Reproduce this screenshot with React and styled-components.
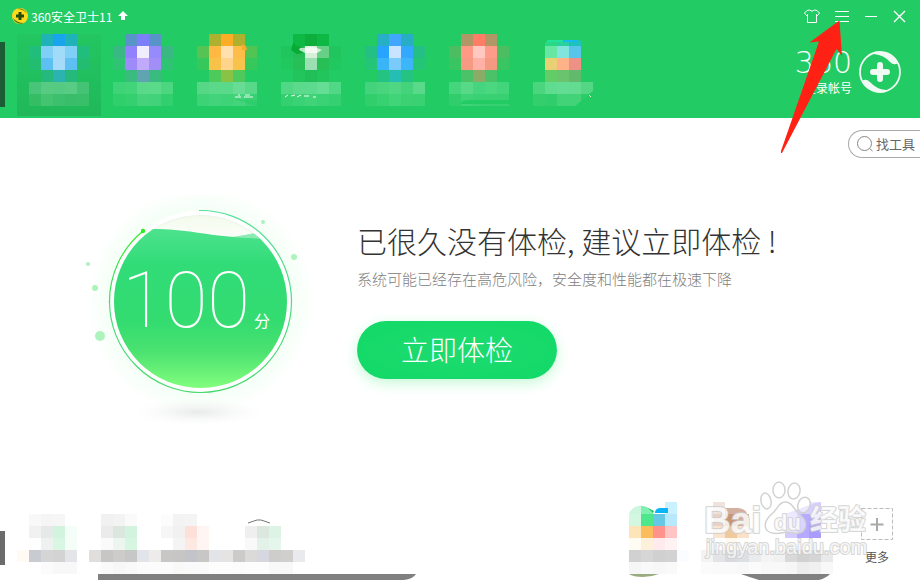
import React from 'react';
import styled, { createGlobalStyle } from 'styled-components';

const CELL = 12;

// every string is one row of 12px cells, "." leaves a cell empty
const palette = (rows) => rows.map((row) => row.trim().split(/\s+/));

const TABS = [
    {
        name: 'checkup',
        active: true,
        rows: palette([
            '. . 1fb2b9 19a5ee 1fb2b9 . .',
            '. 21bd7d 80cff7 a0dcf8 80cff7 21bd7d .',
            '. 22bd70 5ec0f2 a5daf9 5ec0f2 22bd70 .',
            '. . 25b97b 2bb3af 25b97b . .',
            '. 48c579 57cb82 55ca82 58cb85 44c375 .',
            '. 35bd66 44c371 3dc06d 3abd6a 39be69 .',
        ]),
    },
    {
        name: 'trojan',
        rows: palette([
            '. . 5994c8 7b7ffb 5994c8 . .',
            '. 39b884 9181fc f0edff 978afd 39b884 .',
            '. 2fc473 9e8af8 bfaafc a18ff7 2fc473 .',
            '. . 3abb80 5fa4b0 3abb80 . .',
            '. 3fd377 41d479 59d989 5bda8a 4dd680 .',
            '. 2fcf6c 34d06f 44d37b 42d37a 32cf6e .',
        ]),
    },
    {
        name: 'cleanup',
        rows: palette([
            '. . adb12e fbad25 adb12e . .',
            '. 55c453 ffb942 ffe0af ffbd48 52c453 .',
            '. 37c85c f6c24a fed38a f8c34a 37c85c .',
            '. . 4dca5b 88c345 4dca5b . .',
            '. 55d786 5ad98a 5bd98b 68dc94 58d889 .',
            '. 3dd276 43d37b 3fd378 44d47b 38d073 .',
        ]),
    },
    {
        name: 'repair',
        rows: palette([
            '. . 0db845 0dae3c 0db845 . .',
            '. 20c55d 24bd57 d6f0da 67cf86 20c55d .',
            '. 21c85d 27bf56 9bdfb2 27bf56 21c85f .',
            '. . 21c55b 20bf57 21c55b . .',
            '. 50d884 5cda8b 5cda8d 65dd94 50d884 .',
            '. 34cf6e 3bd175 41d378 3ad275 35d071 .',
        ]),
    },
    {
        name: 'speedup',
        rows: palette([
            '. . 27afc6 40a6ff 27adc4 . .',
            '. 24bf84 27a4ff c8e4ff 32a8ff 24bf84 .',
            '. 24c576 38b4f7 7acbfc 3cb6f8 24c576 .',
            '. . 24c382 25beb2 24c382 . .',
            '. 44d27c 48d57e 50d784 43d47b 5ad98a .',
            '. 32ce6c 38d171 42d479 3cd274 39d172 .',
        ]),
    },
    {
        name: 'special',
        rows: palette([
            '. . b19765 ff7d66 b19765 . .',
            '. 4dbd62 ff9986 ffc9c1 ff9b89 4dbd62 .',
            '. 3ac563 f79983 ffb1a5 f59a82 3ac563 .',
            '. . 4bc267 8bab68 4bc267 . .',
            '. 44d57d 57d988 45d57e 4bd780 43d57c .',
            '. 30ce6b 3fd377 3ad174 37d172 38d172 .',
        ]),
    },
    {
        name: 'software',
        rows: palette([
            '. . 29d985 29d0a0 1fc1bc . .',
            '. . 68e7a4 82e5dd 57c4e9 . .',
            '. . ead074 ffb287 ed9186 . .',
            '. . 62cd67 6ac36d 62ba6d . .',
            '. 4bd67e 60dc90 64dc93 62dc91 53d785 .',
            '. 34ce6c 30ce6a 42d378 42d378 2ccd68 .',
        ]),
    },
];

const LEFT_TOOLS = [
    {
        name: 'account',
        rows: palette([
            '. f8f8f8 f5f5f5 f6f6f6 . .',
            '. f1f1f1 e5e9e7 d2f4de f5fdf8 .',
            '. fefefe eff1f0 d8f6e3 f5fdf8 .',
            'fffaf3 c8ccd1 d5d5d5 d3d3d3 e3e5e8 .',
            '. . fbfbfb f8f8f8 f8f8f8 .',
        ]),
    },
    {
        name: 'guard',
        rows: palette([
            '. f1f1f1 f3f3f3 fafafa . .',
            '. ebebeb dbe6df d2f4de . .',
            '. fafafa edf5f1 d7f6e2 . .',
            'e1dfde c8c6c5 cecccb c7c7c7 e1e4e8 edecea',
            '. fafafa f7f7f7 f9f9f9 fcfcfc fcfcfc',
        ]),
    },
    {
        name: 'firewall',
        rows: palette([
            'fcfcfc f3f3f3 f4f4f4 . . .',
            'f6f6f6 f1f1f1 fde0d7 fff5f2 . .',
            '. f4f4f4 fde9e2 fff5f2 . .',
            'c9c7c5 c7c6c5 c2c4ca c8c7c5 e2e4e7 e6e4e2',
            'fcfcfc f9f9f7 fafafa fafafa fdfdfd fdfdfd',
        ]),
    },
    {
        name: 'adblock',
        rows: palette([
            '. . . . . .',
            '. efefef dce8df dcf3e5 . .',
            '. f9f9f9 e2f2e8 e5f7ed . .',
            'cdcbc9 dbdad9 d7d8df cecdcc d0cfce e9eaed',
            'fcfcfc fdfdfd fdfdfd f8f8f8 f8f8f8 .',
        ]),
    },
];

const RIGHT_TOOLS = [
    {
        name: 'manager',
        rows: palette([
            '. . . c9f1ff . .',
            'd4f7e1 4fe78b 65c9e5 b7e8fb . .',
            'fee5b9 fbbd5b ff938b ffc5c5 . .',
            'fffcf3 fef1db ffebee fff2f3 . .',
            'd1d1d1 d6d6d6 d0d0d0 d2d2d2 fafcff .',
            'f6f6f6 f9f9f9 f7f7f7 f9f9f9 . .',
        ]),
    },
    {
        name: 'network',
        rows: palette([
            '. efe3de . . . . .',
            '. e8d2c3 c89672 d2ad98 . . .',
            '. fae4ce f0c99e f9e2c9 . . .',
            '. . fff8ef fffdfa . . .',
            'f3f3f3 e2e4e6 d8dadd dde0e3 e9ebed f4f4f4 f1f1f1',
            'fbfbfb fafafa fafafa f8f8f8 fbfbfb f8f8f8 f8f8f8',
        ]),
    },
    {
        name: 'driver',
        rows: palette([
            '. . ebe8ff .',
            'dad4ff b8abff b7a6ff .',
            'd3cbff b6a9ff aa9cff .',
            '. . . .',
            'd9d9d9 d1d1d1 d5d5d5 e9e9e9',
            'f6f6f6 ededed f0f0f0 f8f8f8',
        ]),
    },
];

const Mosaic = ({ rows, children }) => {
    const width = rows[0].length * CELL;
    const height = rows.length * CELL;

    return (
        <svg width={width} height={height} viewBox={`0 0 ${width} ${height}`} aria-hidden="true">
            <g shapeRendering="crispEdges">
                {rows.map((row, y) => row.map((color, x) => color !== '.' && (
                    <rect key={`${x}-${y}`} x={x * CELL} y={y * CELL} width={CELL} height={CELL} fill={`#${color}`} />
                )))}
            </g>
            {children}
        </svg>
    );
};

// bits that sit over the cells of a few tiles
const details = {
    cleanup: (
        <>
            <path d="M57 10l4 2 1 4h-5z" fill="#f5ab2c" />
            <path d="M50 63h6m3 0h9M53 61h2m5 0h5" stroke="#e9f9ef" fill="none" />
            <path d="M46 64l26 3v5z" fill="#23cb65" opacity=".5" />
        </>
    ),
    repair: (
        <>
            <path d="M24 9l4 3 8 1-2 6-6 1-6-4z" fill="#08ab36" />
            <path d="M31 14l12-1 5 1 5 2-5 3H36l-6-3z" fill="#fff" opacity=".7" />
            <path d="M16 63l3-2m3 1l4-1m2 2l4-2m3 1h5m4 1h3" stroke="#effbf3" fill="none" />
        </>
    ),
    special: <path d="M23 70q2-4 9-4h40v4z" fill="#23cb65" />,
    software: (
        <>
            <path d="M23 0h38v8l-3-2H27l-4 4z" fill="#23cb65" />
            <path d="M26 7l2-1h14v2H26z" fill="#21e399" />
            <path d="M42 6h13l2 2H42z" fill="#18b9ef" />
            <path d="M73 56v17H53z" fill="#23cb65" />
            <path d="M68 61l2 2" stroke="#fff0c8" />
        </>
    ),
    adblock: <path d="M15 9l9-3h4l9 3" stroke="#777" fill="none" />,
    manager: (
        <>
            <path d="M0 12c2-6 8-9 13-8l11 8z" fill="#ccf6df" />
            <path d="M12 4c6 0 9 3 12 5v3H12z" fill="#80efb0" />
            <path d="M19 6l6 3-1 2z" fill="#18cb58" />
            <path d="M26 10q1-4 5-4h8v5H26z" fill="#0bb4f6" />
        </>
    ),
    network: <path d="M24 12V6h13q8 1 9 6z" fill="#c99a86" opacity=".8" />,
    driver: <path d="M0 12L30 1l6-1v12z" fill="#d6cfff" />,
};

const Gauge = () => (
    <svg width="250" height="240" viewBox="70 195 250 240" aria-hidden="true">
        <defs>
            <linearGradient id="liquid" x1="0" y1="0" x2="0" y2="1">
                <stop offset="0" stopColor="#4de28e" />
                <stop offset=".22" stopColor="#31dc78" />
                <stop offset=".58" stopColor="#34dc70" />
                <stop offset=".76" stopColor="#4be270" />
                <stop offset="1" stopColor="#85ff7e" />
            </linearGradient>
            <linearGradient id="ring" x1="0" y1="0" x2="0" y2="1">
                <stop offset="0" stopColor="#57e09a" />
                <stop offset="1" stopColor="#42d86b" />
            </linearGradient>
            <linearGradient id="tail" x1="0" y1="0" x2="0" y2="1">
                <stop offset="0" stopColor="#2df026" />
                <stop offset="1" stopColor="#46d968" />
            </linearGradient>
            <linearGradient id="air" x1="0" y1="0" x2="0" y2="1">
                <stop offset="0" stopColor="#f3fbed" />
                <stop offset=".15" stopColor="#fdfefb" />
            </linearGradient>
            <radialGradient id="glow">
                <stop offset=".8" stopColor="#f4fff6" />
                <stop offset="1" stopColor="#f4fff6" stopOpacity="0" />
            </radialGradient>
            <radialGradient id="shadow">
                <stop offset="0" stopColor="#e8ebe9" />
                <stop offset="1" stopColor="#f4f6f5" stopOpacity="0" />
            </radialGradient>
            <clipPath id="ball"><circle cx="200.5" cy="301.5" r="86.5" /></clipPath>
        </defs>
        <circle cx="200.5" cy="301.5" r="114" fill="url(#glow)" />
        <ellipse cx="198" cy="412" rx="64" ry="13" fill="url(#shadow)" />
        <circle cx="200.5" cy="301.5" r="91" fill="#fff" />
        <circle cx="200.5" cy="301.5" r="86" fill="url(#air)" stroke="#e9f6e7" />
        <g clipPath="url(#ball)">
            <path d="M232 238L254 233L272 238V242Z" fill="#a5efc3" />
            <path d="M110 229H153C185 229 205 235 234 237L270 239H290V390H110Z" fill="url(#liquid)" />
            <path d="M232 237L258 233L270 239Z" fill="#8deab3" />
        </g>
        <path d="M199 210.5A91 91 0 1 1 109.500 301.500" fill="none" stroke="url(#ring)" strokeWidth="1.200" />
        <path d="M109.500 303A91 91 0 0 1 143 231" fill="none" stroke="url(#tail)" strokeWidth="1.200" />
        <circle cx="143" cy="231" r="2.200" fill="#2bee22" />
        <g fill="#adf3bd">
            <circle cx="88" cy="264" r="2" />
            <circle cx="95" cy="288" r="3" />
            <circle cx="100" cy="336" r="5" />
            <circle cx="263" cy="222" r="2" />
            <circle cx="294" cy="257" r="3" />
        </g>
    </svg>
);

const BrandLogo = () => (
    <svg width="16" height="16" viewBox="0 0 16 16" aria-hidden="true">
        <circle cx="8" cy="8" r="8" fill="#ffd91c" />
        <path d="M5 1A8 8 0 0 1 15 6Q12 1 5 1ZM1 10A8 8 0 0 0 12 15Q5 15 1 10Z" fill="#3b7a12" />
        <path d="M8 4v8M4 8h8" stroke="#254d08" strokeWidth="3" />
    </svg>
);

const Avatar = () => (
    <svg width="42" height="42" viewBox="0 0 42 42" aria-hidden="true">
        <circle cx="21" cy="21" r="20" fill="none" stroke="#eefaf2" strokeWidth="1.800" />
        <path d="M15 1C26-1 36 4 39 12Q35 15 31 11Q25 4 15 3Z" fill="#eefaf2" />
        <path d="M27 41C16 43 6 38 3 30Q7 27 11 31Q17 38 27 39Z" fill="#eefaf2" />
        <path d="M21 14v14M14 21h14" stroke="#eefaf2" strokeWidth="6" strokeLinecap="round" />
    </svg>
);

const Paw = () => (
    <svg width="175" height="105" viewBox="700 475 175 105" aria-hidden="true">
        <g fill="#fff" fillOpacity=".5" stroke="#d2d2d2" strokeWidth="1.500" strokeLinejoin="round">
            <ellipse cx="766" cy="501" rx="5" ry="8" transform="rotate(-12 766 501)" />
            <ellipse cx="779" cy="490" rx="6" ry="8" />
            <ellipse cx="794" cy="491" rx="6" ry="8" transform="rotate(10 794 491)" />
            <ellipse cx="804" cy="505" rx="6" ry="8" transform="rotate(20 804 505)" />
            <path d="M785 502C792 502 793 508 798 513C804 518 807 522 805 528C803 534 797 534 787 532C778 534 769 535 766 529C763 522 768 517 773 513C778 508 779 502 785 502Z" />
        </g>
        <WatermarkText>
            <text x="704" y="533" fontSize="37" fontWeight="700">Bai</text>
            <text x="774" y="530" fontSize="22" fontWeight="700">du</text>
            <text x="810" y="530" fontSize="28" fontWeight="700">经验</text>
            <text x="706" y="554" fontSize="20">jingyan.baidu.com</text>
        </WatermarkText>
    </svg>
);

const App = () => (
    <>
        <GlobalStyle />
        <Window>
            <Header>
                <TitleBar>
                    <Brand>
                        <BrandLogo />
                        <span>360安全卫士11</span>
                        <svg width="14" height="10" viewBox="-3 0 14 10" aria-hidden="true">
                            <path d="M5 0L10 5H7V9H3V5H0Z" fill="#fff" />
                        </svg>
                    </Brand>
                    <Controls>
                        <IconButton aria-label="皮肤">
                            <svg width="16" height="16" viewBox="0 0 16 16">
                                <path d="M5.500 2L3 2.500L.5 5L2.500 7.500L3.500 6.500V14.500H12.500V6.500L13.500 7.500L15.500 5L13 2.500L10.500 2Q8 4.500 5.500 2Z" />
                            </svg>
                        </IconButton>
                        <IconButton aria-label="菜单">
                            <svg width="16" height="16" viewBox="0 0 16 16">
                                <path d="M2 3.500H16M2 8.500H16M2 13.500H16" />
                            </svg>
                        </IconButton>
                        <IconButton aria-label="最小化">
                            <svg width="16" height="16" viewBox="0 0 16 16"><path d="M3 8.500H15" /></svg>
                        </IconButton>
                        <IconButton aria-label="关闭">
                            <svg width="16" height="16" viewBox="0 0 16 16">
                                <path d="M3 3L14 14M14 3L3 14" strokeWidth="1.400" />
                            </svg>
                        </IconButton>
                    </Controls>
                </TitleBar>
                <TabRow>
                    <Edge $tall />
                    <Tabs>
                        {TABS.map((tab) => (
                            <Tab key={tab.name} $active={tab.active} aria-label={tab.name}>
                                <Mosaic rows={tab.rows}>{details[tab.name]}</Mosaic>
                            </Tab>
                        ))}
                    </Tabs>
                    <Account href="#account">
                        <AccountText>
                            <Wordmark>360</Wordmark>
                            <span>登录帐号</span>
                        </AccountText>
                        <Avatar />
                    </Account>
                </TabRow>
            </Header>

            <Search>
                <svg width="18" height="18" viewBox="0 0 18 18" aria-hidden="true">
                    <circle cx="8.500" cy="8.500" r="7" fill="none" stroke="#888" />
                    <path d="M13.500 13.500L16.500 16" stroke="#888" />
                </svg>
                <input type="text" placeholder="找工具" aria-label="找工具" />
            </Search>

            <Main>
                <GaugeBox>
                    <Gauge />
                    <Score><b>100</b><span>分</span></Score>
                </GaugeBox>
                <Summary>
                    <h1>已很久没有体检, 建议立即体检 !</h1>
                    <p>系统可能已经存在高危风险，安全度和性能都在极速下降</p>
                    <CheckButton>立即体检</CheckButton>
                </Summary>
            </Main>

            <Footer>
                <Tools>
                    <Edge />
                    <ToolGroup>
                        {LEFT_TOOLS.map((tool) => (
                            <Button key={tool.name} aria-label={tool.name}>
                                <Mosaic rows={tool.rows}>{details[tool.name]}</Mosaic>
                            </Button>
                        ))}
                    </ToolGroup>
                    <ToolGroup $end>
                        {RIGHT_TOOLS.map((tool) => (
                            <Button key={tool.name} aria-label={tool.name}>
                                <Mosaic rows={tool.rows}>{details[tool.name]}</Mosaic>
                            </Button>
                        ))}
                        <More>
                            <svg width="32" height="32" viewBox="0 0 32 32" aria-hidden="true">
                                <rect x=".5" y=".5" width="31" height="31" fill="none" stroke="#bbb" strokeDasharray="4 2" />
                                <path d="M16 10V23M9.500 16.500H22.500" stroke="#aaa" strokeWidth="2" />
                            </svg>
                            <span>更多</span>
                        </More>
                    </ToolGroup>
                </Tools>
                <BottomEdge>
                    <svg width="318" height="6" viewBox="0 0 318 6"><path d="M0 0H318Q315 5 306 6H0Z" fill="#808080" /></svg>
                    <svg width="203" height="6" viewBox="0 0 203 6">
                        <path d="M0 0H30Q22 3 14 3Q4 3 0 0Z" fill="#9aad80" />
                        <path d="M112 0H201Q197 4 190 6H130Q120 3 112 0Z" fill="#808080" />
                    </svg>
                </BottomEdge>
            </Footer>

            <Pointer width="64" height="136" viewBox="780 19 64 136" aria-hidden="true">
                <path d="M839.500 20.500L842 56L836.500 49L782 153H781V151L819 41.500L809.500 42.500Z" fill="#ff2113" />
            </Pointer>
            <Watermark><Paw /></Watermark>
        </Window>
    </>
);

export default App

const GlobalStyle = createGlobalStyle`
  * {
    box-sizing: border-box;
  }

  body {
    margin: 0;
    background: #fff;
    font-family: "Noto Sans CJK SC", sans-serif;
    font-size: 12px;
  }

  svg {
    display: block;
    flex-shrink: 0;
  }
`;

const Window = styled.div`
  position: relative;
  display: flex;
  flex-direction: column;
  min-height: 100vh;
  overflow: hidden;
`;

const Button = styled.button`
  padding: 0;
  border: 0;
  background: none;
  color: inherit;
  font: inherit;
  cursor: pointer;
`;

const Header = styled.header`
  background: #23cb65;
  color: #fff;
  padding-bottom: 2px;
`;

const TitleBar = styled.div`
  display: flex;
  align-items: center;
  justify-content: space-between;
  height: 34px;
  padding: 0 13px 2px 12px;
`;

const Brand = styled.div`
  display: flex;
  align-items: center;
  gap: 3px;
`;

const Controls = styled.div`
  display: flex;
  gap: 13px;
`;

const IconButton = styled(Button)`
  & path {
    fill: none;
    stroke: #fff;
  }
`;

const TabRow = styled.div`
  display: flex;
`;

const Edge = styled.i`
  width: 5px;
  height: ${(p) => (p.$tall ? '65px' : '34px')};
  margin: ${(p) => (p.$tall ? '8px 12px 0 0' : '0 12px 9px 0')};
  background: ${(p) => (p.$tall ? '#1b5c34' : '#6b6b6b')};
`;

const Tabs = styled.nav`
  display: flex;
`;

const Tab = styled(Button)`
  height: 82px;
  padding-bottom: 10px;
  background: ${(p) => (p.$active ? 'linear-gradient(#23c661, #20b85a)' : 'none')};
`;

const Account = styled.a`
  display: flex;
  align-items: center;
  gap: 7px;
  height: 76px;
  margin: 0 19px 0 auto;
  color: #fff;
  text-decoration: none;
`;

const AccountText = styled.span`
  display: flex;
  flex-direction: column;
  align-items: flex-end;
  line-height: 18px;
`;

const Wordmark = styled.span`
  font-family: "DejaVu Sans Light", "DejaVu Sans", sans-serif;
  font-size: 30px;
  font-weight: 200;
  line-height: 32px;
`;

const Search = styled.label`
  display: flex;
  align-items: center;
  align-self: flex-end;
  gap: 2px;
  height: 28px;
  margin-top: 12px;
  padding-left: 7px;
  border: 1px solid #aaa;
  border-right: 0;
  border-radius: 14px 0 0 14px;

  & input {
    width: 44px;
    padding: 0 0 2px;
    border: 0;
    outline: 0;
    background: none;
    color: #555;
    font: inherit;
    font-size: 13px;
  }

  & input::placeholder {
    color: #666;
  }
`;

const Main = styled.main`
  display: flex;
  gap: 37px;
  padding: 37px 20px 0 70px;
`;

const GaugeBox = styled.div`
  display: grid;

  & > * {
    grid-area: 1 / 1;
  }
`;

const Score = styled.div`
  display: flex;
  align-items: baseline;
  justify-content: center;
  gap: 4px;
  padding: 50px 0 0 2px;
  color: #fff;
  font-size: 16px;
  line-height: 112px;

  & span {
    padding-bottom: 2px;
  }

  & b {
    font-family: Roboto, sans-serif;
    font-size: 78px;
    font-weight: 100;
  }
`;

const Summary = styled.section`
  display: flex;
  flex-direction: column;
  align-items: flex-start;
  padding-top: 25px;

  & h1 {
    margin: 0;
    color: #333;
    font-size: 30px;
    font-weight: 300;
    line-height: 40px;
    white-space: nowrap;
  }

  & p {
    margin: 9px 0 32px;
    color: #808080;
    font-size: 15px;
    font-weight: 300;
    line-height: 20px;
  }
`;

const CheckButton = styled(Button)`
  width: 200px;
  height: 58px;
  padding-bottom: 3px;
  border-radius: 29px;
  background: radial-gradient(#1fdb70, #10d966);
  box-shadow: 0 4px 14px #c4f9d6;
  color: #fff;
  font-size: 28px;
  font-weight: 300;
`;

const Footer = styled.footer`
  margin-top: auto;
`;

const Tools = styled.div`
  display: flex;
  align-items: flex-end;
`;

const ToolGroup = styled.div`
  display: flex;
  align-items: flex-end;
  margin-left: ${(p) => (p.$end ? 'auto' : '0')};
  padding-right: ${(p) => (p.$end ? '27px' : '0')};
`;

const More = styled(Button)`
  display: flex;
  flex-direction: column;
  align-items: center;
  gap: 8px;
  margin-left: 28px;
  padding-bottom: 8px;
  color: #555;
  line-height: 18px;
`;

const BottomEdge = styled.div`
  display: flex;
  justify-content: space-between;
  padding: 0 88px 0 98px;
`;

const Pointer = styled.svg`
  position: absolute;
  top: 19px;
  right: 76px;
  pointer-events: none;
`;

const Watermark = styled.div`
  position: absolute;
  right: 45px;
  bottom: 0;
  pointer-events: none;
`;

const WatermarkText = styled.g`
  font-family: "Liberation Sans", "Noto Sans CJK SC", sans-serif;
  fill: #fff;
  fill-opacity: .8;
  stroke: #ccc;
  stroke-width: 2px;
  stroke-opacity: .8;
  stroke-linejoin: round;
  paint-order: stroke;
`;
